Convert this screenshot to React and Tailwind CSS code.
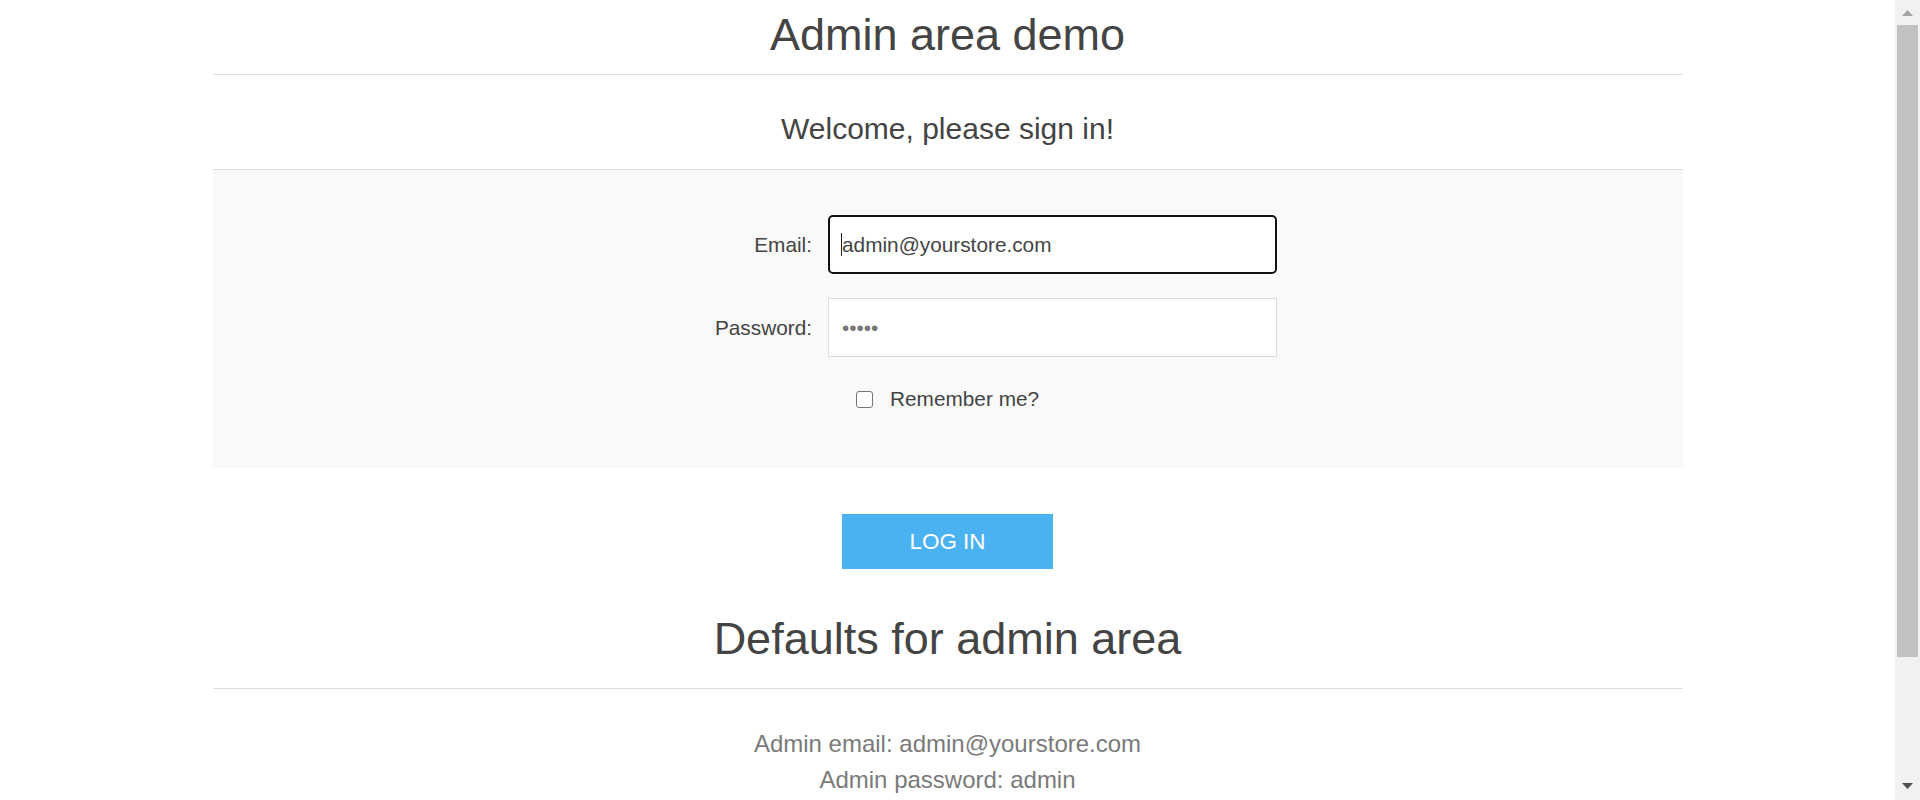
import React from "react";

function Scrollbar() {
    return (
        <div className="flex w-[25px] shrink-0 flex-col bg-[#f1f1f1]">
            <div className="flex h-[25px] items-center justify-center">
                <svg width="11" height="6" viewBox="0 0 11 6">
                    <polygon points="5.5,0 11,6 0,6" fill="#a3a3a3" />
                </svg>
            </div>
            <div className="mx-[2px] h-[632px] bg-[#c1c1c1]" />
            <div className="flex-1" />
            <div className="flex h-[25px] items-start justify-center pt-[8px]">
                <svg width="11" height="6" viewBox="0 0 11 6">
                    <polygon points="0,0 11,0 5.5,6" fill="#505050" />
                </svg>
            </div>
        </div>
    );
}

export default function App() {
    return (
        <div className="flex h-[800px] overflow-hidden bg-white font-['Liberation_Sans',Arial,sans-serif] text-[#444]">
            <main className="flex-1">
                <div className="mx-auto w-[1470px]">
                    <h1 className="border-b border-[#dedede] pt-[5px] pb-[9px] text-center text-[45px] leading-[60px] font-normal">
                        Admin area demo
                    </h1>
                    <div className="border-b border-[#dedede] pt-[34px] pb-[20px] text-center text-[30px] leading-[40px]">
                        Welcome, please sign in!
                    </div>

                    <div className="h-[298px] bg-[#f9f9f9] pt-[45px] text-[20.8px]">
                        <div className="flex h-[59px] items-center justify-center gap-[16px]">
                            <label className="w-[194px] text-right">Email:</label>
                            <div className="relative h-[59px] w-[449px]">
                                <input
                                    type="email"
                                    readOnly
                                    defaultValue="admin@yourstore.com"
                                    className="h-full w-full rounded-[5px] border-2 border-[#111] bg-white pl-[12px] text-[#444] shadow-[0_0_0_1px_#fff] outline-none"
                                />
                                <span className="absolute left-[13px] top-[18px] h-[23px] w-px bg-[#222]" />
                            </div>
                        </div>
                        <div className="mt-[24px] flex h-[59px] items-center justify-center gap-[16px]">
                            <label className="w-[194px] text-right">Password:</label>
                            <input
                                type="password"
                                readOnly
                                defaultValue="admin"
                                className="h-[59px] w-[449px] border border-[#dcdcdc] bg-white pl-[13px] text-[#777] outline-none"
                            />
                        </div>
                        <div className="mt-[27px] flex h-[30px] items-center justify-center gap-[16px]">
                            <div className="w-[194px]" />
                            <div className="flex w-[449px] items-center pl-[28px]">
                                <input
                                    type="checkbox"
                                    className="h-[17px] w-[17px] appearance-none rounded-[3px] border border-[#767676] bg-white"
                                />
                                <span className="ml-[17px]">Remember me?</span>
                            </div>
                        </div>
                    </div>

                    <div className="flex justify-center pt-[46px]">
                        <button className="h-[55px] w-[211px] bg-[#4bb2f2] text-[22.4px] text-white uppercase">
                            Log in
                        </button>
                    </div>

                    <h2 className="mt-[40px] border-b border-[#dedede] pb-[19px] text-center text-[45px] leading-[60px] font-normal">
                        Defaults for admin area
                    </h2>
                    <div className="pt-[37px] text-center text-[24px] leading-[36px] text-[#7a7a7a]">
                        <p>Admin email: admin@yourstore.com</p>
                        <p>Admin password: admin</p>
                    </div>
                </div>
            </main>
            <Scrollbar />
        </div>
    );
}
